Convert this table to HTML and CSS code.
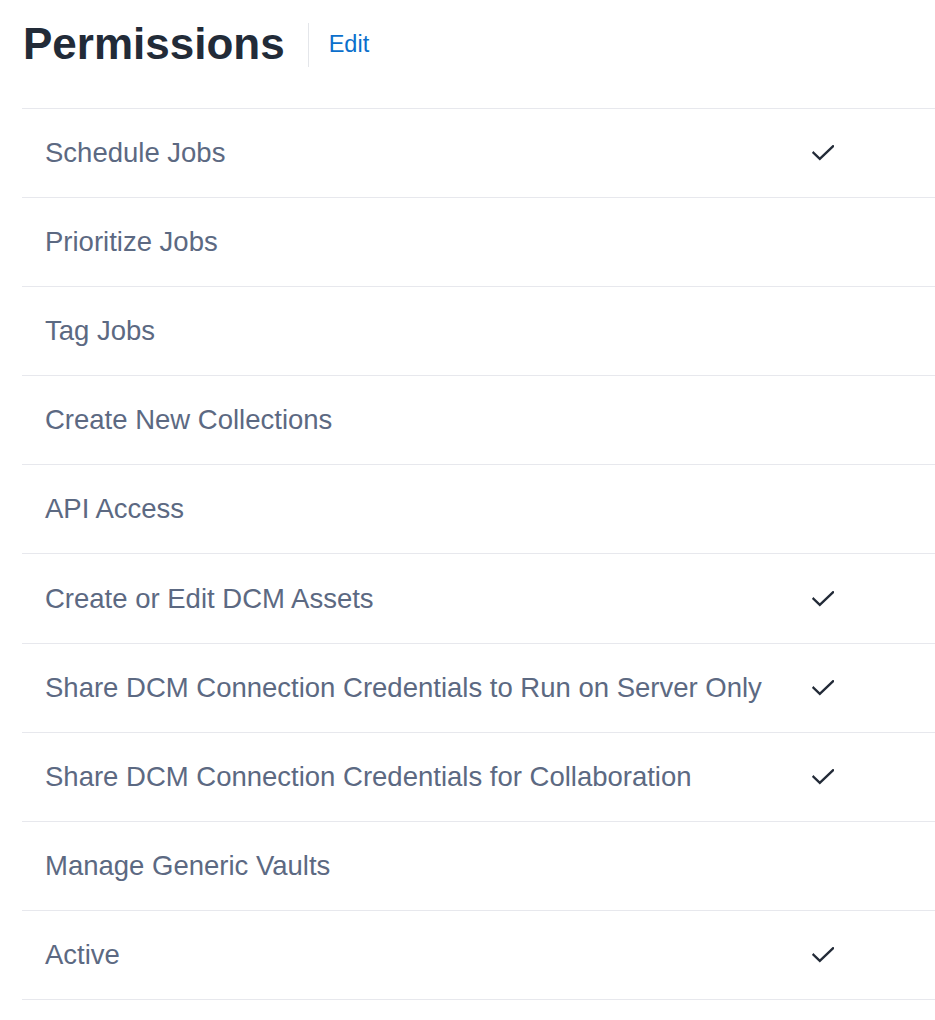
FILE: index.html
```html
<!DOCTYPE html>
<html lang="en">
<head>
<meta charset="utf-8">
<title>Permissions</title>
<link rel="stylesheet" href="styles.css">
</head>
<body>
<div class="page">
  <header class="header">
    <h1 class="title">Permissions</h1>
    <span class="divider"></span>
    <a class="edit" href="#">Edit</a>
  </header>
  <div class="table">
    <div class="row"><span class="label">Schedule Jobs</span><span class="check"><svg viewBox="0 0 22 16" width="22" height="16"><path d="M1.5 7.8 L7.8 13.8 L21 1.3" /></svg></span></div>
    <div class="row"><span class="label">Prioritize Jobs</span><span class="check"></span></div>
    <div class="row"><span class="label">Tag Jobs</span><span class="check"></span></div>
    <div class="row"><span class="label">Create New Collections</span><span class="check"></span></div>
    <div class="row"><span class="label">API Access</span><span class="check"></span></div>
    <div class="row"><span class="label">Create or Edit DCM Assets</span><span class="check"><svg viewBox="0 0 22 16" width="22" height="16"><path d="M1.5 7.8 L7.8 13.8 L21 1.3" /></svg></span></div>
    <div class="row"><span class="label">Share DCM Connection Credentials to Run on Server Only</span><span class="check"><svg viewBox="0 0 22 16" width="22" height="16"><path d="M1.5 7.8 L7.8 13.8 L21 1.3" /></svg></span></div>
    <div class="row"><span class="label">Share DCM Connection Credentials for Collaboration</span><span class="check"><svg viewBox="0 0 22 16" width="22" height="16"><path d="M1.5 7.8 L7.8 13.8 L21 1.3" /></svg></span></div>
    <div class="row"><span class="label">Manage Generic Vaults</span><span class="check"></span></div>
    <div class="row"><span class="label">Active</span><span class="check"><svg viewBox="0 0 22 16" width="22" height="16"><path d="M1.5 7.8 L7.8 13.8 L21 1.3" /></svg></span></div>
  </div>
</div>
</body>
</html>
```

FILE: styles.css
```css
html, body {
  margin: 0;
  padding: 0;
  background: #ffffff;
}
body {
  font-family: "Liberation Sans", Arial, sans-serif;
}
.page {
  padding-left: 22px;
  overflow: hidden;
}
.header {
  display: flex;
  align-items: center;
  height: 44px;
  padding-top: 23px;
}
.title {
  margin: -3px 0 0 1px;
  font-size: 44px;
  line-height: 44px;
  font-weight: 700;
  color: #222b38;
}
.divider {
  width: 1px;
  height: 44px;
  background: #e4e6ea;
  margin-left: 23px;
}
.edit {
  margin-left: 20px;
  margin-top: -1px;
  font-size: 23.5px;
  color: #0b6fcc;
  text-decoration: none;
}
.table {
  margin-top: 41px;
  border-top: 1px solid #e7e8ed;
  width: 960px;
}
.row {
  display: flex;
  align-items: center;
  height: 88.1px;
  border-bottom: 1px solid #e7e8ed;
}
.label {
  width: 767px;
  padding-left: 23px;
  font-size: 27.5px;
  color: #5c6982;
  white-space: nowrap;
}
.check {
  display: flex;
  width: 24px;
  height: 16px;
}
.check svg {
  fill: none;
  stroke: #232b38;
  stroke-width: 2.4;
  stroke-linecap: square;
  stroke-linejoin: miter;
}
```
